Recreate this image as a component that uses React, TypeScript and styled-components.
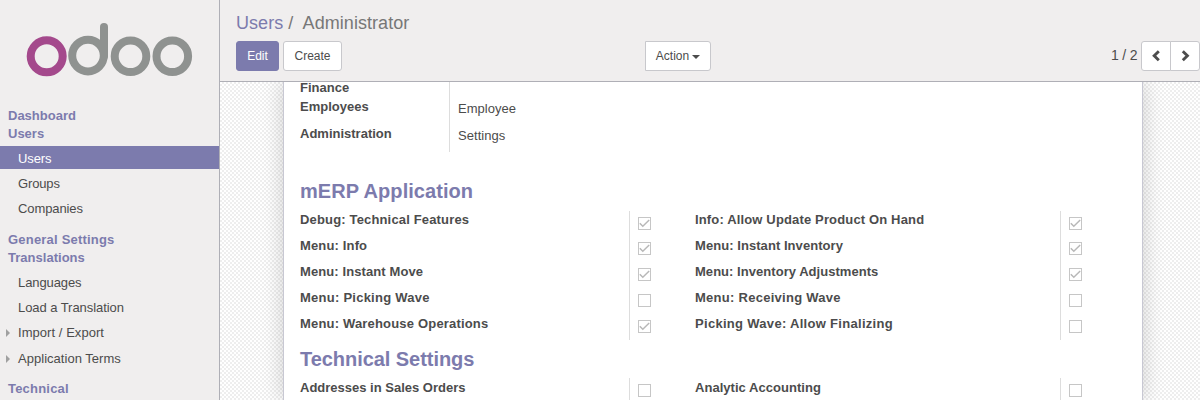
import React from "react";
import styled, { createGlobalStyle } from "styled-components";

const Global = createGlobalStyle`
  * { box-sizing: border-box; }
  body { margin: 0; overflow: hidden; font-family: "Liberation Sans", Arial, sans-serif; font-size: 13px; color: #4c4c4c; }
`;

const Page = styled.div`
  display: flex;
  width: 1200px;
  height: 400px;
  overflow: hidden;
`;
const Sidebar = styled.nav`
  flex: none;
  width: 220px;
  height: 400px;
  overflow: hidden;
  background: #f0eeee;
  border-right: 1px solid #afafb6;
`;
const LogoBox = styled.div`
  height: 107px;
  padding: 20px 0 0 24px;
`;
const MenuTitle = styled.div<{ $ls: number; $top?: number }>`
  height: 18px;
  line-height: 18px;
  margin-top: ${(p) => p.$top ?? 0}px;
  padding-left: 8px;
  font-weight: bold;
  color: #7c7bad;
  letter-spacing: ${(p) => p.$ls}px;
  white-space: nowrap;
`;
const MenuItem = styled.div<{ $active?: boolean; $ls: number; $top: number }>`
  display: flex;
  align-items: center;
  height: 23px;
  margin-top: ${(p) => p.$top}px;
  padding-top: 2px;
  color: ${(p) => (p.$active ? "#fff" : "#4c4c4c")};
  background: ${(p) => (p.$active ? "#7c7bad" : "transparent")};
  letter-spacing: ${(p) => p.$ls}px;
  white-space: nowrap;
`;
const ArrowSlot = styled.span`
  display: flex;
  width: 18px;
  padding-left: 6px;
`;
const Arrow = styled.span`
  border: 4px solid transparent;
  border-left-color: #a0a0a0;
  border-right: 0;
`;
const Main = styled.main`
  display: flex;
  flex-direction: column;
  width: 980px;
`;
const ControlPanel = styled.header`
  flex: none;
  height: 82px;
  background: #f0eeee;
  border-bottom: 1px solid #afafb6;
  padding: 12px 0 0 16px;
`;
const Breadcrumb = styled.div`
  height: 22px;
  line-height: 22px;
  font-size: 18px;
  letter-spacing: 0.06px;
  color: #777;
  white-space: pre;
`;
const Link = styled.span`
  color: #7c7bad;
`;
const Toolbar = styled.div`
  display: flex;
  margin-top: 7px;
  height: 30px;
`;
const Button = styled.button<{ $primary?: boolean; $w: number; $left?: number; $radius?: string }>`
  display: flex;
  flex: none;
  align-items: center;
  justify-content: center;
  width: ${(p) => p.$w}px;
  height: 30px;
  margin: 0 0 0 ${(p) => p.$left ?? 0}px;
  padding: 0;
  font: 12px "Liberation Sans", Arial, sans-serif;
  border: 1px solid ${(p) => (p.$primary ? "#7c7bad" : "#c8c8cc")};
  border-radius: ${(p) => p.$radius ?? "3px"};
  color: ${(p) => (p.$primary ? "#fff" : "#4c4c4c")};
  background: ${(p) => (p.$primary ? "#7c7bad" : "#fff")};
`;
const Caret = styled.span`
  margin: 2px 0 0 3px;
  border: 4px solid transparent;
  border-top-color: #4c4c4c;
  border-bottom: 0;
`;
const Pager = styled.span`
  width: 26px;
  margin-left: 400px;
  line-height: 28px;
  font-size: 14px;
  letter-spacing: -0.2px;
  white-space: nowrap;
`;
const Canvas = styled.div`
  height: 318px;
  overflow: hidden;
  padding-left: 63px;
  background: repeating-conic-gradient(#eeeeee 0 25%, #fff 0 50%) 0 0 / 4px 4px;
`;
const SheetShadow = styled.div`
  width: 860px;
  box-shadow: 0 0 20px rgba(0, 0, 0, 0.18);
`;
const Sheet = styled.section`
  width: 860px;
  height: 318px;
  overflow: hidden;
  padding-left: 16px;
  background: #fff;
  border: solid #c8c8d3;
  border-width: 0 1px;
`;
const Fields = styled.div`
  display: flex;
  height: 70px;
`;
const FieldLabels = styled.div`
  width: 149px;
  margin-top: -3px;
`;
const FieldValues = styled.div`
  padding: 18px 0 0 8px;
  border-left: 1px solid #ddd;
`;
const Label = styled.div<{ $h: number; $ls?: number }>`
  height: ${(p) => p.$h}px;
  line-height: 18px;
  font-weight: bold;
  letter-spacing: ${(p) => p.$ls ?? 0}px;
  white-space: nowrap;
`;
const Value = styled.div`
  height: 27px;
  line-height: 18px;
  letter-spacing: 0.04px;
`;
const Heading = styled.h2<{ $top: number; $h: number; $ls: number }>`
  margin: ${(p) => p.$top}px 0 0;
  height: ${(p) => p.$h}px;
  line-height: 24px;
  font-size: 20px;
  color: #7c7bad;
  letter-spacing: ${(p) => p.$ls}px;
`;
const Columns = styled.div<{ $h: number }>`
  display: flex;
  height: ${(p) => p.$h}px;
`;
const Labels = styled.div<{ $w: number; $top: number }>`
  width: ${(p) => p.$w}px;
  padding-top: ${(p) => p.$top}px;
`;
const Checks = styled.div<{ $w: number }>`
  width: ${(p) => p.$w}px;
  padding: 6px 0 0 8px;
  border-left: 1px solid #ddd;
`;
const Check = styled.div<{ $gap: number }>`
  width: 13px;
  height: 13px;
  margin-bottom: ${(p) => p.$gap}px;
  border: 1px solid #c6c6c6;
  svg { display: block; }
`;

const CheckList = ({ items, width }: { items: boolean[]; width: number }) => (
  <Checks $w={width}>
    {items.map((on, i) => (
      <Check key={i} $gap={i === 0 ? 12 : 13}>
        {on && (
          <svg width="11" height="11" viewBox="0 0 11 11">
            <path d="M0.8 5.2L3.8 8.2L10.2 2" fill="none" stroke="#b8b8b8" strokeWidth="1.5" />
          </svg>
        )}
      </Check>
    ))}
  </Checks>
);

const left: [string, number][] = [
  ["Debug: Technical Features", 0.16],
  ["Menu: Info", 0.15],
  ["Menu: Instant Move", 0.1],
  ["Menu: Picking Wave", 0.25],
  ["Menu: Warehouse Operations", 0.18],
];
const right: [string, number][] = [
  ["Info: Allow Update Product On Hand", 0.15],
  ["Menu: Instant Inventory", 0.06],
  ["Menu: Inventory Adjustments", 0.04],
  ["Menu: Receiving Wave", 0.27],
  ["Picking Wave: Allow Finalizing", 0.3],
];

const LabelList = ({ items, width, top = 0 }: { items: [string, number][]; width: number; top?: number }) => (
  <Labels $w={width} $top={top}>
    {items.map(([text, ls]) => (
      <Label key={text} $h={26} $ls={ls}>{text}</Label>
    ))}
  </Labels>
);

const Item = ({ text, ls = 0, top = 2, active, arrow }: { text: string; ls?: number; top?: number; active?: boolean; arrow?: boolean }) => (
  <MenuItem $ls={ls} $top={top} $active={active}>
    <ArrowSlot>{arrow && <Arrow />}</ArrowSlot>
    {text}
  </MenuItem>
);

export default function App() {
  return (
    <Page>
      <Global />
      <Sidebar>
        <LogoBox>
          <svg width="172" height="60" viewBox="24 20 172 60" fill="none" strokeWidth="8">
            <circle cx="88" cy="55.6" r="15.8" stroke="#8f9290" />
            <path d="M104 27V56" stroke="#8f9290" strokeLinecap="round" />
            <circle cx="130.5" cy="56.3" r="15.8" stroke="#8f9290" />
            <circle cx="172.3" cy="56.3" r="15.8" stroke="#8f9290" />
            <circle cx="46.7" cy="56.3" r="16" stroke="#a4498c" />
          </svg>
        </LogoBox>
        <MenuTitle $ls={0}>Dashboard</MenuTitle>
        <MenuTitle $ls={0}>Users</MenuTitle>
        <Item text="Users" top={3} ls={-0.1} active />
        <Item text="Groups" ls={-0.15} />
        <Item text="Companies" ls={-0.1} />
        <MenuTitle $ls={0.2} $top={12}>General Settings</MenuTitle>
        <MenuTitle $ls={0.02}>Translations</MenuTitle>
        <Item text="Languages" top={3} ls={-0.1} />
        <Item text="Load a Translation" ls={-0.06} />
        <Item text="Import / Export" ls={0.05} arrow />
        <Item text="Application Terms" ls={0.03} top={3} arrow />
        <MenuTitle $ls={0.2} $top={11}>Technical</MenuTitle>
      </Sidebar>
      <Main>
        <ControlPanel>
          <Breadcrumb><Link>Users</Link> /  Administrator</Breadcrumb>
          <Toolbar>
            <Button $primary $w={43}>Edit</Button>
            <Button $w={59} $left={4}>Create</Button>
            <Button $w={66} $left={303} $radius="0 3px 3px 0">Action<Caret /></Button>
            <Pager>1 / 2</Pager>
            <Button $w={30} $left={4} $radius="3px 0 0 3px">
              <svg width="10" height="12" viewBox="0 0 10 12"><path d="M7.8 1.3L3.2 5.8L7.8 10.3" fill="none" stroke="#4c4c4c" strokeWidth="2.9" /></svg>
            </Button>
            <Button $w={30} $left={-1} $radius="0 3px 3px 0">
              <svg width="10" height="12" viewBox="0 0 10 12"><path d="M2.8 1.3L7.4 5.8L2.8 10.3" fill="none" stroke="#4c4c4c" strokeWidth="2.9" /></svg>
            </Button>
          </Toolbar>
        </ControlPanel>
        <Canvas>
          <SheetShadow>
            <Sheet>
              <Fields>
                <FieldLabels>
                  <Label $h={19}>Finance</Label>
                  <Label $h={27}>Employees</Label>
                  <Label $h={27}>Administration</Label>
                </FieldLabels>
                <FieldValues>
                  <Value>Employee</Value>
                  <Value>Settings</Value>
                </FieldValues>
              </Fields>
              <Heading $top={27} $h={32} $ls={0.05}>mERP Application</Heading>
              <Columns $h={129}>
                <LabelList items={left} width={329} />
                <CheckList items={[true, true, true, false, true]} width={66} />
                <LabelList items={right} width={365} />
                <CheckList items={[true, true, true, false, false]} width={60} />
              </Columns>
              <Heading $top={7} $h={31} $ls={-0.05}>Technical Settings</Heading>
              <Columns $h={30}>
                <LabelList items={[["Addresses in Sales Orders", 0]]} width={329} top={1} />
                <CheckList items={[false]} width={66} />
                <LabelList items={[["Analytic Accounting", 0.04]]} width={365} top={1} />
                <CheckList items={[false]} width={60} />
              </Columns>
            </Sheet>
          </SheetShadow>
        </Canvas>
      </Main>
    </Page>
  );
}
